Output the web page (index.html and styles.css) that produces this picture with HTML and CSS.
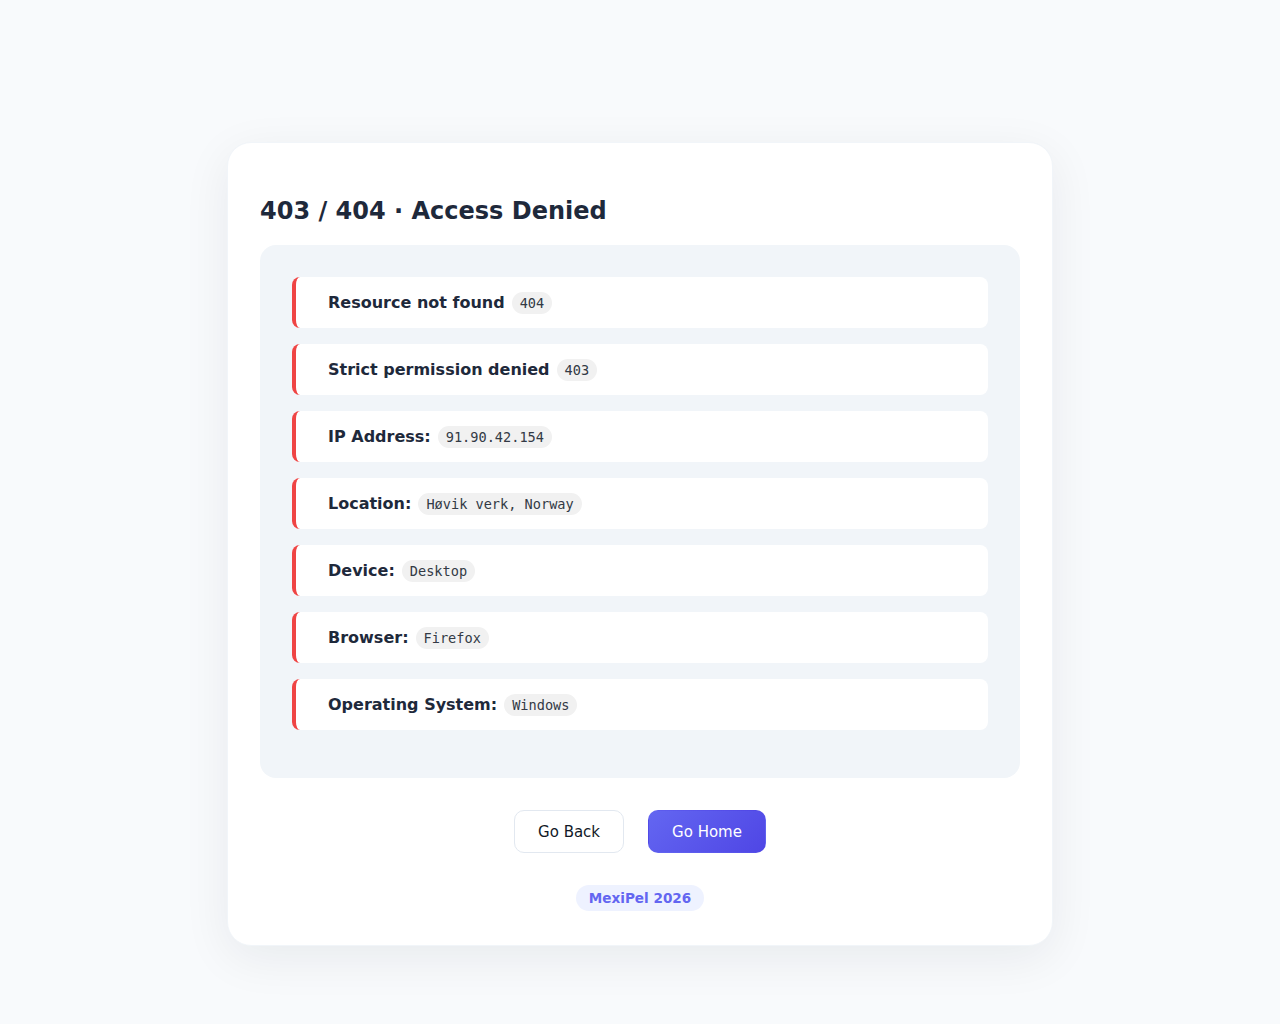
FILE: index.html
```html
<!DOCTYPE html>
<html lang="en">
<head>
    <meta charset="UTF-8">
    <meta name="viewport" content="width=device-width, initial-scale=1.0">
    <title>403 / 404 · Access Denied</title>
    <link rel="stylesheet" href="styles.css">
</head>
<body>
    <div class="card">
        <h1>403 / 404 · Access Denied</h1>
        <div class="panel">
            <div class="row"><strong>Resource not found</strong> <code>404</code></div>
            <div class="row"><strong>Strict permission denied</strong> <code>403</code></div>
            <div class="row"><strong>IP Address:</strong> <code>91.90.42.154</code></div>
            <div class="row"><strong>Location:</strong> <code>Høvik verk, Norway</code></div>
            <div class="row"><strong>Device:</strong> <code>Desktop</code></div>
            <div class="row"><strong>Browser:</strong> <code>Firefox</code></div>
            <div class="row"><strong>Operating System:</strong> <code>Windows</code></div>
        </div>
        <div class="actions">
            <button class="button" onclick="history.back()">Go Back</button>
            <button class="button primary" onclick="location.href='/'">Go Home</button>
        </div>
        <div class="footer"><span class="brand">MexiPel 2026</span></div>
    </div>
</body>
</html>
```

FILE: styles.css
```css
body {
    margin: 0;
    font-family: "DejaVu Sans", sans-serif;
    background-color: #f8fafc;
    color: #1e293b;
    display: flex;
    justify-content: center;
    padding: 142px 0 79px;
}
.card {
    width: 760px;
    background-color: #ffffff;
    border: 1px solid #f1f5f9;
    border-radius: 24px;
    padding: 32px 32px 34px;
    box-shadow: 0 12px 48px rgba(15, 23, 42, 0.07);
}
h1 {
    font-size: 24px;
    line-height: 30px;
    margin: 21px 0 19px;
}
.panel {
    background-color: #f1f5f9;
    border-radius: 16px;
    padding: 32px;
}
.row {
    background-color: #ffffff;
    border-left: 4px solid #ef4444;
    border-radius: 8px;
    padding: 0 32px;
    height: 51px;
    margin-bottom: 16px;
    display: flex;
    align-items: center;
    gap: 7px;
    font-size: 16px;
}
.row strong {
    font-weight: bold;
}
code {
    font-family: "DejaVu Sans Mono", monospace;
    font-size: 13.6px;
    background-color: #f1f1f1;
    color: #333a45;
    padding: 3px 8px;
    border-radius: 11px;
    line-height: 16px;
}
.actions {
    display: flex;
    justify-content: center;
    gap: 24px;
    margin-top: 32px;
}
.button {
    font-family: "DejaVu Sans", sans-serif;
    font-size: 15px;
    height: 43px;
    padding: 0 23px;
    cursor: pointer;
    background-color: #ffffff;
    color: #111827;
    border: 1px solid #e2e8f0;
    border-radius: 10px;
}
.button.primary {
    background: linear-gradient(135deg, #6366f1, #4f46e5);
    border-color: transparent;
    color: #ffffff;
}
.footer {
    display: flex;
    justify-content: center;
    margin-top: 32px;
}
.brand {
    font-size: 13.6px;
    font-weight: bold;
    color: #6366f1;
    background-color: #eef2ff;
    border-radius: 13px;
    padding: 4px 13px;
    line-height: 18px;
}
```
